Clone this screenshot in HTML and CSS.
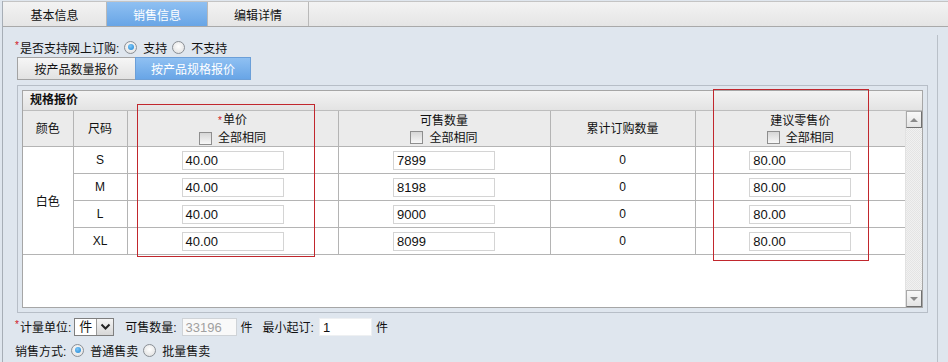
FILE: index.html
```html
<!DOCTYPE html>
<html lang="zh">
<head>
<meta charset="utf-8">
<link rel="stylesheet" href="styles.css">
</head>
<body>
<div class="app">
  <div class="tabs">
    <div class="tab">基本信息</div>
    <div class="tab active">销售信息</div>
    <div class="tab">编辑详情</div>
  </div>
  <div class="content">
    <div class="row row-online">
      <span class="req">*</span><span>是否支持网上订购:</span>
      <span class="radio on"></span><span class="lbl">支持</span>
      <span class="radio"></span><span class="lbl">不支持</span>
    </div>
    <div class="subtabs">
      <div class="subtab">按产品数量报价</div>
      <div class="subtab active">按产品规格报价</div>
    </div>
    <div class="panel">
      <div class="gridbox">
        <div class="gridtitle">规格报价</div>
        <div class="gridbody">
          <div class="gridscroll">
            <table class="spec">
              <colgroup>
                <col class="c1"><col class="c2"><col class="c3"><col class="c4"><col class="c5"><col class="c6">
              </colgroup>
              <thead>
                <tr>
                  <th>颜色</th>
                  <th>尺码</th>
                  <th><div><span class="req">*</span>单价</div><div class="same"><span class="chk"></span>全部相同</div></th>
                  <th><div>可售数量</div><div class="same"><span class="chk"></span>全部相同</div></th>
                  <th>累计订购数量</th>
                  <th><div>建议零售价</div><div class="same"><span class="chk"></span>全部相同</div></th>
                </tr>
              </thead>
              <tbody>
                <tr><td rowspan="4">白色</td><td class="num">S</td><td><span class="inp">40.00</span></td><td><span class="inp">7899</span></td><td class="num">0</td><td><span class="inp">80.00</span></td></tr>
                <tr><td class="num">M</td><td><span class="inp">40.00</span></td><td><span class="inp">8198</span></td><td class="num">0</td><td><span class="inp">80.00</span></td></tr>
                <tr><td class="num">L</td><td><span class="inp">40.00</span></td><td><span class="inp">9000</span></td><td class="num">0</td><td><span class="inp">80.00</span></td></tr>
                <tr><td class="num">XL</td><td><span class="inp">40.00</span></td><td><span class="inp">8099</span></td><td class="num">0</td><td><span class="inp">80.00</span></td></tr>
              </tbody>
            </table>
          </div>
          <div class="vscroll">
            <div class="sbtn up"><span class="tri-up"></span></div>
            <div class="strack"></div>
            <div class="sbtn down"><span class="tri-down"></span></div>
          </div>
        </div>
      </div>
    </div>
    <div class="row row-unit">
      <span class="req">*</span><span>计量单位:</span>
      <span class="select"><span class="selval">件</span><span class="selbtn"><svg width="11" height="8" viewBox="0 0 11 8"><path d="M1.5 1.5 L5.5 5.5 L9.5 1.5" fill="none" stroke="#222" stroke-width="2"/></svg></span></span>
      <span class="lbl-gap">可售数量:</span>
      <span class="field disabled">33196</span>
      <span class="unit">件</span>
      <span class="lbl-gap2">最小起订:</span>
      <span class="field plain">1</span>
      <span class="unit">件</span>
    </div>
    <div class="row row-mode">
      <span>销售方式:</span>
      <span class="radio on"></span><span class="lbl">普通售卖</span>
      <span class="radio"></span><span class="lbl">批量售卖</span>
    </div>
  </div>
  <div class="redbox box1"></div>
  <div class="redbox box2"></div>
  <div class="pageedge"></div>
</div>
</body>
</html>
```
FILE: styles.css
```css
* { box-sizing: border-box; }
html, body {
  margin: 0;
  padding: 0;
  background: #dfe6ee;
  font-family: "Liberation Sans", "Noto Sans CJK SC", sans-serif;
  font-size: 12px;
  color: #111;
}
body { width: 948px; height: 362px; overflow: hidden; }
.app {
  position: relative;
  margin-left: 2px;
  border-left: 1px solid #a7aeb6;
  height: 362px;
}
.tabs {
  display: flex;
  margin-top: 1px;
  height: 26px;
  border-top: 1px solid #c4c4c4;
  border-bottom: 1px solid #a9a9a9;
  background: linear-gradient(#f3f3f3, #e5e5e5);
}
.tab {
  width: 101px;
  border-right: 1px solid #b9b9b9;
  display: flex;
  align-items: center;
  justify-content: center;
  padding-top: 1px;
  color: #111;
}
.tab:first-child { width: 104px; }
.tab.active {
  background: linear-gradient(#8fc0f2, #68a5e6);
  color: #fff;
}
.content { padding-left: 12px; }
.row { display: flex; align-items: center; white-space: nowrap; }
.req { color: #d0161c; font-size: 10px; align-self: flex-start; margin-top: 2px; margin-right: 1px; }
.row-online { margin-top: 10px; height: 20px; }
.row-online .req { margin-top: 3px; }
.radio {
  display: inline-block;
  width: 13px;
  height: 13px;
  border-radius: 50%;
  border: 1px solid #8a8f95;
  background: radial-gradient(circle at 50% 40%, #ffffff, #dcdcdc);
  position: relative;
  margin: 0 6px 0 5px;
}
.radio.on::after {
  content: "";
  position: absolute;
  left: 2.5px; top: 2.5px;
  width: 6px; height: 6px;
  border-radius: 50%;
  background: radial-gradient(circle at 40% 35%, #7fc6f5, #1a85d6);
}
.row-online .radio:first-of-type { margin-left: 7px; }
.lbl { margin-right: 0; }
.subtabs {
  display: flex;
  margin-left: 2px;
  height: 23px;
}
.subtab {
  width: 118px;
  display: flex;
  align-items: center;
  justify-content: center;
  border: 1px solid #a3a3a3;
  border-right: none;
  background: linear-gradient(#f6f6f6, #e2e2e2);
}
.subtab.active {
  width: 116px;
  border: 1px solid #6b9fd8;
  background: linear-gradient(#8fc0f2, #68a5e6);
  color: #fff;
}
.panel {
  margin-top: 5px;
  margin-left: 2px;
  width: 911px;
  height: 228px;
  border: 1px solid #b7bec7;
  padding: 4px;
}
.gridbox {
  height: 218px;
  border: 1px solid #a6a6a6;
  display: flex;
  flex-direction: column;
  background: #fff;
}
.gridtitle {
  height: 20px;
  line-height: 19px;
  padding-left: 7px;
  font-weight: bold;
  background: linear-gradient(#f3f3f3, #e3e3e3);
  border-bottom: 1px solid #bdbdbd;
}
.gridbody { flex: 1; display: flex; min-height: 0; }
.gridscroll { width: 882px; overflow: hidden; }
.spec {
  border-collapse: collapse;
  table-layout: fixed;
  width: 882px;
}
.c1 { width: 50px; } .c2 { width: 54px; } .c3 { width: 211px; }
.c4 { width: 212px; } .c5 { width: 145px; } .c6 { width: 210px; }
.spec th, .spec td {
  border-right: 1px solid #b4b4b4;
  border-bottom: 1px solid #b4b4b4;
  text-align: center;
  padding: 0;
  font-weight: normal;
}
.spec th:last-child, .spec td:last-child { border-right: none; }
.spec th {
  height: 35px;
  background: #ebebeb;
  line-height: 16px;
  padding-top: 1px;
}
.spec td { height: 27px; }
.same { display: flex; align-items: center; justify-content: center; margin-top: 1px; }
.chk {
  display: inline-block;
  width: 13px; height: 13px;
  border: 1px solid #8e8e8e;
  background: linear-gradient(#d6d6d6, #f7f7f7);
  margin-right: 6px;
}
.num { font-size: 12px; }
.inp {
  display: inline-block;
  width: 102px;
  height: 19px;
  line-height: 17px;
  border: 1px solid #d4d4d4;
  background: #fff;
  text-align: left;
  padding-left: 3px;
  vertical-align: middle;
  font-size: 13px;
}
.vscroll {
  width: 17px;
  display: flex;
  flex-direction: column;
  background-color: #f1f1f1;
  background-image:
    linear-gradient(45deg, #e4e4e4 25%, transparent 25%, transparent 75%, #e4e4e4 75%),
    linear-gradient(45deg, #e4e4e4 25%, transparent 25%, transparent 75%, #e4e4e4 75%);
  background-size: 2px 2px;
  background-position: 0 0, 1px 1px;
  border-left: 1px solid #e2e2e2;
}
.sbtn {
  height: 17px;
  background: linear-gradient(#f8f8f8, #e4e4e4);
  border: 1px solid #a9a9a9;
  border-right-color: #707070;
  border-bottom-color: #707070;
  display: flex;
  align-items: center;
  justify-content: center;
}
.strack { flex: 1; }
.tri-up { width: 0; height: 0; border-left: 4px solid transparent; border-right: 4px solid transparent; border-bottom: 4px solid #8a8a8a; }
.tri-down { width: 0; height: 0; border-left: 4px solid transparent; border-right: 4px solid transparent; border-top: 4px solid #8a8a8a; }
.row-unit { margin-top: 4px; height: 19px; }
.select {
  display: inline-flex;
  margin-left: 3px;
  height: 18px;
  width: 40px;
  border: 1px solid #7f7f7f;
  background: #fff;
}
.selval { width: 21px; text-align: center; line-height: 16px; font-size: 13px; }
.selbtn {
  flex: 1;
  display: flex; align-items: center; justify-content: center;
  background: linear-gradient(#f4f4f4, #d7d7d7);
  border-left: 1px solid #9a9a9a;
}
.lbl-gap { margin-left: 11px; }
.lbl-gap2 { margin-left: 10px; }
.field {
  display: inline-block;
  height: 18px;
  line-height: 17px;
  padding-left: 3px;
  margin-left: 5px;
  font-size: 13px;
  background: #fff;
}
.field.disabled { width: 55px; color: #a0a0a0; border: 1px solid #cfd3d7; background: #f9f9f9; }
.field.plain { width: 53px; border: 1px solid #eef0f2; }
.unit { margin-left: 4px; }
.row-mode { margin-top: 5px; height: 18px; }
.row-mode .radio:first-of-type { margin-left: 3px; }
.redbox {
  position: absolute;
  border: 1px solid #c1272d;
  pointer-events: none;
}
.box1 { left: 134px; top: 103px; width: 178px; height: 153px; }
.box2 { left: 710px; top: 88px; width: 156px; height: 172px; }
.pageedge {
  position: absolute;
  left: 934px;
  top: 34px;
  bottom: 0;
  border-left: 1px solid #b9c0c8;
}
```
